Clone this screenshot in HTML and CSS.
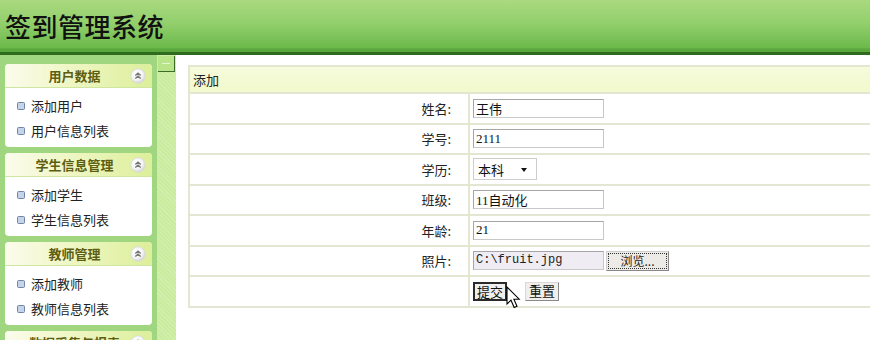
FILE: index.html
```html
<!DOCTYPE html>
<html lang="zh-CN">
<head>
<meta charset="utf-8">
<title>签到管理系统</title>
<link rel="stylesheet" href="styles.css">
</head>
<body>
<div class="page">
  <header class="header"><h1 class="title">签到管理系统</h1></header>
  <div class="layout">
    <aside class="sidebar">
      <section class="panel">
        <div class="panel-head"><span class="panel-title">用户数据</span>
          <svg class="toggle" viewBox="0 0 16 16" width="16" height="16"><defs><radialGradient id="g1" cx="40%" cy="35%" r="70%"><stop offset="0" stop-color="#ffffff"/><stop offset="0.6" stop-color="#f4f4f4"/><stop offset="1" stop-color="#cfcfcf"/></radialGradient></defs><circle cx="8" cy="8" r="7.2" fill="url(#g1)" stroke="#d8d8d8" stroke-width="0.8"/><path d="M5.3 7.6 L8 5.2 L10.7 7.6 M5.3 10.6 L8 8.2 L10.7 10.6" fill="none" stroke="#777" stroke-width="1.4"/></svg>
        </div>
        <ul class="panel-body"><li>添加用户</li><li>用户信息列表</li></ul>
      </section>
      <section class="panel">
        <div class="panel-head"><span class="panel-title">学生信息管理</span>
          <svg class="toggle" viewBox="0 0 16 16" width="16" height="16"><circle cx="8" cy="8" r="7.2" fill="url(#g1)" stroke="#d8d8d8" stroke-width="0.8"/><path d="M5.3 7.6 L8 5.2 L10.7 7.6 M5.3 10.6 L8 8.2 L10.7 10.6" fill="none" stroke="#777" stroke-width="1.4"/></svg>
        </div>
        <ul class="panel-body"><li>添加学生</li><li>学生信息列表</li></ul>
      </section>
      <section class="panel">
        <div class="panel-head"><span class="panel-title">教师管理</span>
          <svg class="toggle" viewBox="0 0 16 16" width="16" height="16"><circle cx="8" cy="8" r="7.2" fill="url(#g1)" stroke="#d8d8d8" stroke-width="0.8"/><path d="M5.3 7.6 L8 5.2 L10.7 7.6 M5.3 10.6 L8 8.2 L10.7 10.6" fill="none" stroke="#777" stroke-width="1.4"/></svg>
        </div>
        <ul class="panel-body"><li>添加教师</li><li>教师信息列表</li></ul>
      </section>
      <section class="panel">
        <div class="panel-head"><span class="panel-title">数据采集与报表</span>
          <svg class="toggle" viewBox="0 0 16 16" width="16" height="16"><circle cx="8" cy="8" r="7.2" fill="url(#g1)" stroke="#d8d8d8" stroke-width="0.8"/><path d="M5.3 7.6 L8 5.2 L10.7 7.6 M5.3 10.6 L8 8.2 L10.7 10.6" fill="none" stroke="#777" stroke-width="1.4"/></svg>
        </div>
        <ul class="panel-body"><li>数据采集</li><li>报表</li></ul>
      </section>
    </aside>
    <div class="splitter"><div class="split-btn"><span class="split-line"></span></div></div>
    <main class="main">
      <table class="form">
        <tr><th colspan="2" class="caption">添加</th></tr>
        <tr><td class="label">姓名:</td><td class="value"><input class="text" type="text" value="王伟"></td></tr>
        <tr><td class="label">学号:</td><td class="value"><input class="text" type="text" value="2111"></td></tr>
        <tr><td class="label">学历:</td><td class="value"><span class="select">本科<span class="arrow"></span></span></td></tr>
        <tr><td class="label">班级:</td><td class="value"><input class="text" type="text" value="11自动化"></td></tr>
        <tr><td class="label">年龄:</td><td class="value"><input class="text" type="text" value="21"></td></tr>
        <tr><td class="label">照片:</td><td class="value"><span class="file"><span class="file-path">C:\fruit.jpg</span><span class="file-btn"><span class="file-btn-inner">浏览...</span></span></span></td></tr>
        <tr><td class="label"></td><td class="value"><span class="actions"><span class="btn btn-focus">提交</span><span class="btn">重置</span><svg class="cursor" viewBox="0 0 16 24" width="16" height="24"><path d="M1 1 L1 18 L5 14.2 L8.2 21.5 L11 20.3 L7.9 13.2 L13.2 13.2 Z" fill="#fff" stroke="#000" stroke-width="1.1" stroke-linejoin="miter"/></svg></span></td></tr>
      </table>
    </main>
  </div>
</div>
</body>
</html>
```
FILE: styles.css
```css
* { box-sizing: border-box; }
html, body { margin: 0; padding: 0; }
body {
  width: 870px;
  height: 340px;
  overflow: hidden;
  background: #fff;
  font-family: "Noto Sans CJK SC", "Liberation Sans", sans-serif;
  font-size: 13px;
  color: #222;
}
.page { width: 870px; height: 340px; display: flex; flex-direction: column; }
.header {
  height: 55px;
  flex: none;
  background: linear-gradient(to bottom, #aad97f 0%, #92cf6c 45%, #6cb94b 92%, #5aa83c 94%);
  border-bottom: 3px solid #2f6b1f;
  padding: 11px 0 0 5px;
}
.title {
  margin: 0;
  font-size: 26px;
  line-height: 30px;
  font-weight: 500;
  color: #111;
  letter-spacing: 0.5px;
}
.layout { flex: 1; display: flex; min-height: 0; overflow: hidden; }
.sidebar {
  width: 157px;
  flex: none;
  background: #a0d67f;
  padding: 9px 5px 0 5px;
  display: flex;
  flex-direction: column;
  gap: 6px;
  overflow: hidden;
}
.panel {
  flex: none;
  background: #fff;
  border-radius: 4px;
  overflow: hidden;
}
.panel-head {
  height: 24px;
  display: flex;
  align-items: center;
  justify-content: center;
  position: relative;
  background: linear-gradient(to right, #fbfcec 0%, #f0f7c8 40%, #dcef9a 100%);
  border-bottom: 1px solid #cfe6a0;
}
.panel-title {
  font-weight: bold;
  color: #5e5e12;
  font-size: 13px;
  margin-right: 8px;
}
.toggle { position: absolute; right: 6px; top: 4px; }
.panel-body {
  list-style: none;
  margin: 0;
  padding: 5px 0 4px 12px;
}
.panel-body li {
  height: 25px;
  line-height: 25px;
  display: flex;
  align-items: center;
  gap: 6px;
  color: #222;
  font-size: 13px;
}
.panel-body li::before {
  content: "";
  width: 6px;
  height: 6px;
  border: 1px solid #6f84a6;
  background: #c6d4ea;
  border-radius: 1.5px;
  flex: none;
}
.splitter {
  width: 19px;
  flex: none;
  background-color: #c9ec9e;
  background-image: repeating-linear-gradient(45deg, rgba(255,255,255,0.18) 0 1px, transparent 1px 3px);
  padding: 1px 0 0 1px;
}
.split-btn {
  width: 17px;
  height: 16px;
  background: #b9e489;
  border-right: 1px solid #3e6c2a;
  border-bottom: 1px solid #3e6c2a;
  display: flex;
  align-items: center;
  justify-content: center;
}
.split-line { width: 8px; height: 1px; background: #e6f6d2; }
.main { flex: 1; background: #fff; overflow: hidden; padding: 10px 0 0 12px; min-width: 0; }
.form {
  border-collapse: collapse;
  width: 700px;
  border: 2px solid #e2e4ce;
}
.form th, .form td { padding: 0; border: 2px solid #e4e6d2; }
.caption {
  height: 27px;
  text-align: left;
  font-weight: normal;
  padding-left: 3px !important;
  background: linear-gradient(to bottom, #f6fbdc, #f1f9cc);
  color: #222;
}
.form td { height: 30.5px; }
.label { width: 280px; text-align: right; padding-right: 17px !important; color: #222; }
.value { padding-left: 3px !important; }
.text {
  display: block;
  width: 131px;
  height: 19px;
  margin: 0;
  border: 1px solid #a6a6a6;
  border-right-color: #c8c8c8;
  border-bottom-color: #c8c8c8;
  padding: 0 2px;
  font-family: "Liberation Serif", "Noto Sans CJK SC", serif;
  font-size: 13px;
  color: #111;
  background: #fff;
}
.select {
  display: flex;
  align-items: center;
  width: 64px;
  height: 22px;
  border: 1px solid #cdcdcd;
  padding-left: 4px;
  font-size: 13px;
  color: #111;
  position: relative;
}
.arrow {
  position: absolute;
  right: 9px;
  top: 9px;
  border-left: 3.5px solid transparent;
  border-right: 3.5px solid transparent;
  border-top: 4px solid #111;
}
.file { display: flex; align-items: center; gap: 2px; }
.file-path {
  width: 131px;
  height: 19px;
  border: 1px solid #a6a6a6;
  border-right-color: #c8c8c8;
  border-bottom-color: #c8c8c8;
  background: #efedf3;
  font-family: "Liberation Mono", monospace;
  font-size: 12px;
  line-height: 17px;
  padding-left: 2px;
  color: #222;
}
.file-btn {
  width: 63px;
  height: 20px;
  border: 1px solid #888;
  border-top-color: #d0d0d0;
  border-left-color: #d0d0d0;
  background: #edebe7;
  padding: 1px;
  display: flex;
}
.file-btn-inner {
  flex: 1;
  border: 1px dotted #333;
  font-size: 12px;
  line-height: 14px;
  text-align: center;
  color: #222;
}
.actions { display: flex; align-items: center; gap: 18px; position: relative; }
.btn {
  height: 19px;
  padding: 0 3px;
  border: 1px solid #8a8a8a;
  border-top-color: #d8d8d8;
  border-left-color: #d8d8d8;
  background: #f0efeb;
  font-size: 13px;
  line-height: 16px;
  color: #111;
}
.btn-focus { border: 2px solid #2a2a2a; line-height: 15px; padding: 0 2px; background: #efefee; }
.cursor { position: absolute; left: 33px; top: 4px; }
```
